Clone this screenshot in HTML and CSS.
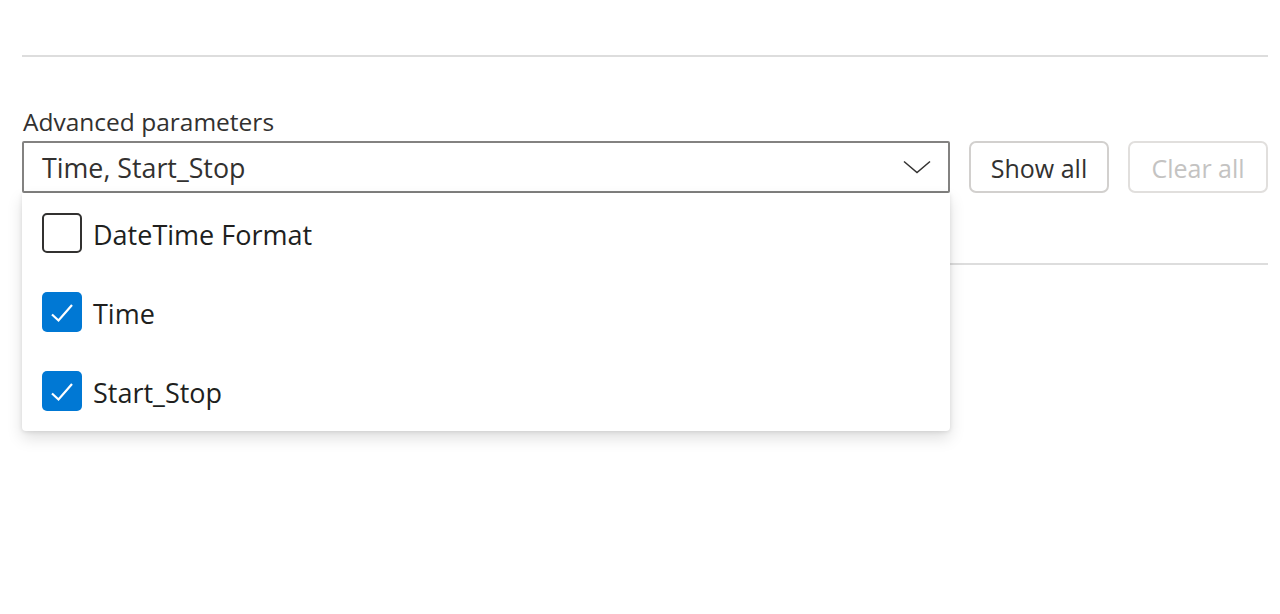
FILE: index.html
```html
<!DOCTYPE html>
<html lang="en">
<head>
<meta charset="utf-8">
<title>Advanced parameters</title>
<link rel="stylesheet" href="styles.css">
</head>
<body>
<div class="page">
  <div class="divider divider-top"></div>
  <div class="field">
    <div class="label">Advanced parameters</div>
    <div class="row">
      <div class="dropdown-wrap">
        <div class="dropdown">
          <span class="dropdown-text">Time, Start_Stop</span>
          <svg class="chevron" width="28" height="14" viewBox="0 0 28 14"><path d="M1 1.5 L14 12.5 L27 1.5" fill="none" stroke="#323130" stroke-width="1.5"/></svg>
        </div>
        <div class="panel">
          <div class="option">
            <span class="box"></span>
            <span class="option-text">DateTime Format</span>
          </div>
          <div class="option">
            <span class="box checked"><svg width="40" height="40" viewBox="0 0 40 40"><path d="M10 22.5 L16.5 28.5 L30 13" fill="none" stroke="#fff" stroke-width="2.2"/></svg></span>
            <span class="option-text">Time</span>
          </div>
          <div class="option">
            <span class="box checked"><svg width="40" height="40" viewBox="0 0 40 40"><path d="M10 22.5 L16.5 28.5 L30 13" fill="none" stroke="#fff" stroke-width="2.2"/></svg></span>
            <span class="option-text">Start_Stop</span>
          </div>
        </div>
      </div>
      <button class="btn">Show all</button>
      <button class="btn btn-disabled">Clear all</button>
    </div>
  </div>
  <div class="divider divider-bottom"></div>
</div>
</body>
</html>
```
FILE: styles.css
```css
html, body {
  margin: 0;
  padding: 0;
  background: #ffffff;
}
body {
  min-height: 614px;
  font-family: "Open Sans", "Noto Sans", sans-serif;
  color: #323130;
}
.page {
  padding: 0 12px 0 22px;
}
.divider {
  height: 2px;
  background: #dddddd;
}
.divider-top {
  margin-top: 55px;
}
.field {
  margin-top: 49px;
}
.label {
  font-size: 24.5px;
  line-height: 32px;
  height: 35px;
  padding-left: 1px;
}
.row {
  display: flex;
  gap: 19px;
  height: 52px;
}
.dropdown-wrap {
  position: relative;
  flex: 1;
}
.dropdown {
  box-sizing: border-box;
  height: 52px;
  border: 2px solid #838281;
  border-radius: 2px;
  display: flex;
  align-items: center;
  justify-content: space-between;
  padding: 0 17px 0 18px;
}
.dropdown-text {
  font-size: 26.8px;
  line-height: 32px;
  padding-top: 1px;
}
.chevron {
  display: block;
}
.panel {
  position: absolute;
  left: 0;
  right: 0;
  top: 52px;
  height: 238px;
  background: #ffffff;
  border-radius: 0 0 4px 4px;
  box-shadow: 0 7px 16px rgba(0, 0, 0, 0.13), 0 1px 4px rgba(0, 0, 0, 0.1);
  z-index: 2;
}
.option {
  height: 79px;
  display: flex;
  align-items: center;
  padding-left: 20px;
}
.box {
  box-sizing: border-box;
  width: 40px;
  height: 40px;
  border: 2px solid #323130;
  border-radius: 5px;
  margin-right: 11px;
  flex: none;
}
.box.checked {
  border: none;
  background: #0078d4;
}
.box svg {
  display: block;
}
.option-text {
  font-size: 27px;
  line-height: 32px;
  padding-top: 4px;
  color: #201f1e;
}
.btn {
  box-sizing: border-box;
  width: 140px;
  height: 52px;
  border: 2px solid #d2d0ce;
  border-radius: 7px;
  background: #ffffff;
  font-family: "Open Sans", "Noto Sans", sans-serif;
  font-size: 25px;
  color: #323130;
  padding: 1px 0 0;
  flex: none;
}
.btn-disabled {
  color: #c4c3c2;
  border-color: #e1dfdd;
}
.divider-bottom {
  margin-top: 70px;
}
```
